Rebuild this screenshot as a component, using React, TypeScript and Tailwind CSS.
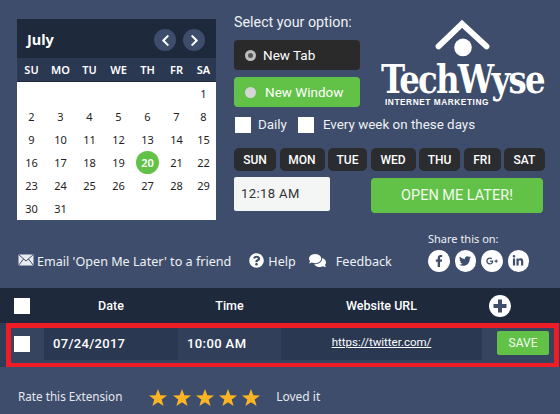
import React from "react";
import {
  FaChevronLeft,
  FaChevronRight,
  FaComments,
  FaFacebookF,
  FaGooglePlusG,
  FaLinkedinIn,
  FaQuestionCircle,
  FaTwitter,
} from "react-icons/fa";

const weekHeads = ["SU", "MO", "TU", "WE", "TH", "FR", "SA"];
const dayButtons = [
  { label: "SUN", width: "w-[42px]" },
  { label: "MON", width: "w-[45px]" },
  { label: "TUE", width: "w-[39px]" },
  { label: "WED", width: "w-[45px]" },
  { label: "THU", width: "w-[41px]" },
  { label: "FRI", width: "w-[37px]" },
  { label: "SAT", width: "w-[41px]" },
];
const calendarCells: (number | null)[] = [
  ...Array<null>(6).fill(null),
  ...Array.from({ length: 31 }, (_, i) => i + 1),
];

function Calendar() {
  return (
    <div className="w-[199px] h-[201px] bg-white shrink-0 font-['Noto_Sans',sans-serif]">
      <div className="h-[39px] bg-[#1e293c] flex items-center justify-between pt-[3px] pl-[10px] pr-[11px]">
        <span className="text-[14.5px] font-bold text-white">July</span>
        <div className="flex gap-[7px]">
          <span className="w-[22px] h-[22px] rounded-full bg-[#3e4d6b] flex items-center justify-center text-white text-[13px]">
            <FaChevronLeft />
          </span>
          <span className="w-[22px] h-[22px] rounded-full bg-[#3e4d6b] flex items-center justify-center text-white text-[13px]">
            <FaChevronRight />
          </span>
        </div>
      </div>
      <div className="h-[24px] pt-[2px] bg-[#2b3852] grid grid-cols-[repeat(6,29px)_25px] items-center border-b border-[#1e293c]">
        {weekHeads.map((d) => (
          <span key={d} className="text-center text-[11px] font-semibold text-white">
            {d}
          </span>
        ))}
      </div>
      <div className="grid grid-cols-[repeat(6,29px)_25px] auto-rows-[23px] text-[11px] text-[#222]">
        {calendarCells.map((n, i) =>
          n === 20 ? (
            <span key={i} className="flex items-center justify-center">
              <span className="w-[23px] h-[23px] pt-[1px] rounded-full bg-[#62c248] text-white font-semibold flex items-center justify-center">
                20
              </span>
            </span>
          ) : (
            <span key={i} className="flex items-center justify-center pt-[2px]">
              {n}
            </span>
          ),
        )}
      </div>
    </div>
  );
}

function Logo() {
  return (
    <div className="w-[165px] ml-[20px] flex flex-col items-center">
      <svg width="60" height="48" viewBox="0 0 60 48" className="mb-[-2px]">
        <polyline points="5,28 29,5 54,28" fill="none" stroke="white" strokeWidth="6" strokeLinecap="round" />
        <circle cx="30" cy="29" r="9" fill="white" />
      </svg>
      <span className="text-[40px] leading-[30px] font-bold text-white font-['DejaVu_Serif_Condensed','DejaVu_Serif',serif] tracking-[-2px] whitespace-nowrap scale-x-[0.9]">
        TechWyse
      </span>
      <span className="self-start ml-[5px] mt-[3px] text-[8.3px] leading-[10px] font-bold tracking-[0.55px] text-white font-['Liberation_Sans',sans-serif]">
        INTERNET MARKETING
      </span>
    </div>
  );
}

function OptionPanel() {
  return (
    <div className="w-[311px] ml-[18px] font-['Roboto',sans-serif] text-white">
      <div className="flex h-[88px]">
        <div className="w-[126px] shrink-0">
          <div className="text-[14.3px] leading-[16px] mt-[-5px] whitespace-nowrap text-[#eef1f6]">Select your option:</div>
          <div className="mt-[10px] h-[30px] rounded-[4px] bg-[#2a2a2a] flex items-center pl-[11px] text-[13.5px]">
            <span className="w-[11px] h-[11px] rounded-full bg-[#bdbdbd] flex items-center justify-center">
              <span className="w-[5px] h-[5px] rounded-full bg-[#555]" />
            </span>
            <span className="ml-[7px]">New Tab</span>
          </div>
          <div className="mt-[7px] h-[30px] rounded-[4px] bg-[#62c248] flex items-center pl-[11px] text-[13.5px]">
            <span className="w-[11px] h-[11px] rounded-full bg-[#d5d5d5]" />
            <span className="ml-[9px]">New Window</span>
          </div>
        </div>
        <Logo />
      </div>
      <div className="mt-[10px] h-[16px] flex items-center text-[13.4px] text-[#eef1f6]">
        <span className="w-[16px] h-[16px] bg-white ml-[1px]" />
        <span className="ml-[7px]">Daily</span>
        <span className="w-[16px] h-[16px] bg-white ml-[11px]" />
        <span className="ml-[9px]">Every week on these days</span>
      </div>
      <div className="mt-[15px] flex gap-[3.5px]">
        {dayButtons.map((d) => (
          <span
            key={d.label}
            className={`${d.width} h-[23px] rounded-[5px] bg-[#2a2c2f] flex items-center justify-center text-[12px] font-medium`}
          >
            {d.label}
          </span>
        ))}
      </div>
      <div className="mt-[6px] flex justify-between items-start pr-[2px]">
        <div className="w-[96px] h-[34px] rounded-[2px] bg-[#f4f5f5] text-[#333] text-[13px] tracking-[0.4px] flex items-center pl-[7px]">
          12:18 AM
        </div>
        <button className="w-[172px] h-[35px] mt-[1px] rounded-[4px] bg-[#62c248] text-[14.5px] text-[#f3fbef]">
          OPEN ME LATER!
        </button>
      </div>
    </div>
  );
}

function LinksRow() {
  return (
    <div className="flex h-[68px] pl-[18px] font-['Noto_Sans',sans-serif] text-[12.6px] text-[#eef1f6]">
      <div className="w-[410px] flex items-start pt-[33px] h-full">
        <svg width="16" height="12" viewBox="0 0 16 12" className="mt-[1px]">
          <rect x="0.5" y="0.5" width="15" height="11" fill="#e8ebf0" />
          <path d="M0.5 0.5 L8 7 L15.5 0.5 M0.5 11.5 L5.5 5 M15.5 11.5 L10.5 5" fill="none" stroke="#3e4d6b" strokeWidth="1" />
        </svg>
        <span className="ml-[3px] leading-[18px]">Email 'Open Me Later' to a friend</span>
        <FaQuestionCircle className="ml-[18px] text-[15px] text-white" />
        <span className="ml-[4px] leading-[18px]">Help</span>
        <FaComments className="ml-[13px] mt-[-1px] text-[17px] text-white" />
        <span className="ml-[10px] leading-[18px]">Feedback</span>
      </div>
      <div className="pt-[11px]">
        <div className="text-[11px] leading-[16px]">Share this on:</div>
        <div className="mt-[3px] flex gap-[5px]">
          {[FaFacebookF, FaTwitter, FaGooglePlusG, FaLinkedinIn].map((Icon, i) => (
            <span key={i} className="w-[21.5px] h-[21.5px] rounded-full bg-white flex items-center justify-center text-[#3e4d6b] text-[12px]">
              <Icon />
            </span>
          ))}
        </div>
      </div>
    </div>
  );
}

function Star() {
  return (
    <svg width="18" height="17" viewBox="0 0 18 17">
      <polygon points="9,0 11.3,6.2 18,6.5 12.7,10.6 14.6,17 9,13.3 3.4,17 5.3,10.6 0,6.5 6.7,6.2" fill="#fbb522" />
    </svg>
  );
}

function SavedTable() {
  return (
    <div className="font-['Roboto',sans-serif] text-white">
      <div className="h-[35px] bg-[#1e293c] flex items-center text-[12.5px] font-medium pl-[14px]">
        <span className="w-[30px] shrink-0">
          <span className="block w-[16px] h-[16px] bg-white" />
        </span>
        <span className="w-[134px] pt-[2px] text-center">Date</span>
        <span className="w-[103px] pt-[2px] text-center">Time</span>
        <span className="w-[201px] pt-[2px] text-center">Website URL</span>
        <span className="ml-[7px] w-[22px] h-[22px] rounded-full bg-white flex items-center justify-center">
          <svg width="16" height="16" viewBox="0 0 16 16">
            <path d="M8 1.5v13M1.5 8h13" stroke="#3e4d6b" strokeWidth="4" />
          </svg>
        </span>
      </div>
      <div className="h-[44px] bg-[#2f3c57] pl-[6px] pr-[1px]">
        <div className="h-full border-[5px] border-t-[5px] border-b-[4px] border-[#ee1c25] bg-[#36445f]">
          <div className="flex h-[32px] items-stretch">
            <span className="w-[33px] shrink-0 flex items-center pl-[3px]">
              <span className="w-[16px] h-[16px] bg-white" />
            </span>
            <span className="w-[134px] bg-[#2b3852] flex items-center pl-[9px] text-[13px] font-medium tracking-[0.3px]">07/24/2017</span>
            <span className="w-[103px] bg-[#323f5a] flex items-center pl-[9px] text-[13px] font-medium tracking-[0.4px]">10:00 AM</span>
            <span className="w-[201px] bg-[#2b3852] flex items-center justify-center pb-[2px] text-[11.5px] underline">https://twitter.com/</span>
            <span className="flex-1 flex items-center pl-[15px] pb-[2px]">
              <button className="w-[52px] h-[24px] rounded-[2px] bg-[#62c248] text-[12px] text-[#f3fbef]">SAVE</button>
            </span>
          </div>
        </div>
      </div>
      <div className="flex items-center h-[47px] pl-[18px] pt-[13px] font-['Noto_Sans',sans-serif] text-[11.7px] text-[#e4e8ef]">
        <span>Rate this Extension</span>
        <span className="flex ml-[27px] gap-[5.2px]">
          {[0, 1, 2, 3, 4].map((i) => (
            <Star key={i} />
          ))}
        </span>
        <span className="ml-[16px] text-[12px]">Loved it</span>
      </div>
    </div>
  );
}

export default function App() {
  return (
    <div className="w-[560px] h-[414px] overflow-hidden bg-[#3e4d6b]">
      <div className="flex pt-[19px] pl-[17px]">
        <Calendar />
        <OptionPanel />
      </div>
      <LinksRow />
      <SavedTable />
    </div>
  );
}
